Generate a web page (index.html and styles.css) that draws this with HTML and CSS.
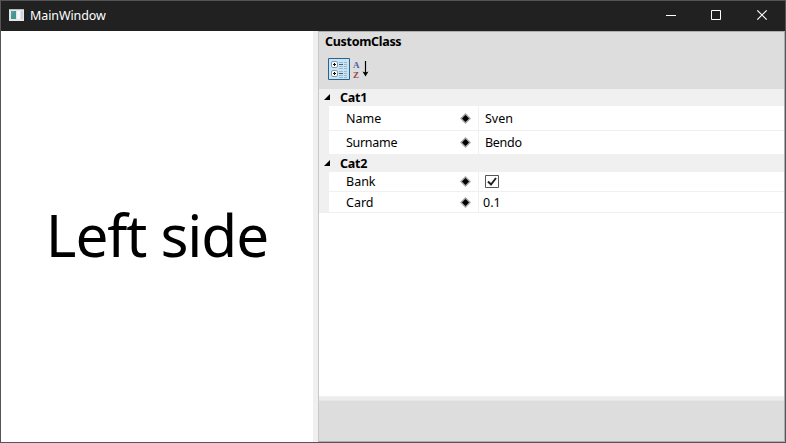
FILE: index.html
```html
<!DOCTYPE html>
<html lang="en">
<head>
<meta charset="utf-8">
<title>MainWindow</title>
<link rel="stylesheet" href="styles.css">
</head>
<body>
<svg class="defs" width="0" height="0" aria-hidden="true">
  <symbol id="diamond" viewBox="0 0 11 11"><path d="M5.500 0 11 5.500 5.500 11 0 5.500z" fill="#a2a2a2"/><path d="M5.500 2 9 5.500 5.500 9 2 5.500z" fill="#000"/><path d="M4 4h3v3H4z" fill="#000"/></symbol>
  <symbol id="expander" viewBox="0 0 6 6"><path d="M6 0v6H0z" fill="#000"/></symbol>
</svg>
<div class="window">
  <header class="titlebar">
    <svg class="app-icon" width="15" height="12" viewBox="0 0 15 12">
      <path d="M0 0h15v12H0z" fill="#e4e6e8"/><path d="M0 0h15v1H0z" fill="#b9bcbf"/>
      <path d="M2 2h5v8H2z" fill="#45998b"/><path d="M2 2h4L2 7z" fill="#5e98ae"/><path d="M8 2h3v8H8z" fill="#f8f8fa"/><path d="M12 2h2v8h-2z" fill="#cdd3e2"/>
    </svg>
    <span class="caption">MainWindow</span>
    <svg class="ctl" width="45" height="30" viewBox="0 0 45 30"><path d="M17 14.500h10" stroke="#fff"/></svg>
    <svg class="ctl" width="46" height="30" viewBox="0 0 46 30"><path d="M17.500 9.500h9v9h-9z" stroke="#fff" fill="none"/></svg>
    <svg class="ctl" width="45" height="30" viewBox="0 0 45 30"><path d="m17.300 9.300 9.400 9.400m0-9.400-9.400 9.400" stroke="#fff" stroke-width="1.200"/></svg>
  </header>
  <main class="content">
    <section class="left"><span>Left side</span></section>
    <div class="splitter"></div>
    <section class="grid">
      <div class="head">
        <div class="type">CustomClass</div>
        <div class="tools">
          <svg width="22" height="22" viewBox="0 0 22 22">
            <path d="M.5.5h21v21H.5z" fill="#c5e5f7" stroke="#2c628b"/>
            <g fill="#fff" stroke="#8799aa"><rect x="3.500" y="3.500" width="6" height="6" rx="1.500"/><rect x="3.500" y="12.500" width="6" height="6" rx="1.500"/></g>
            <path d="M5 6.500h3M6.500 5v3M5 15.500h3M6.500 14v3" stroke="#111"/>
            <path d="M11 6.500h4M11 15.500h4" stroke="#4c5c68"/>
            <path d="M11 4.500h4M11 8.500h4M11 10.500h4M11 13.500h4M11 17.500h4M11 19.500h4M16 4.500h3M16 6.500h3M16 8.500h3M16 10.500h3M16 13.500h3M16 15.500h3M16 17.500h3M16 19.500h3" stroke="#8ba5b6" stroke-width=".7"/>
          </svg>
          <div class="az"><span class="a">A</span><span class="z">Z</span></div>
          <svg class="arrow" width="7" height="16" viewBox="0 0 7 16"><path d="M3.500 0v13" stroke="#000" stroke-width="1.200"/><path d="M.5 10.500 3.500 11.500l3-1-3 5z" fill="#000"/></svg>
        </div>
      </div>
      <div class="body">
        <div class="cat c1"><svg width="6" height="6"><use href="#expander"/></svg><span>Cat1</span></div>
        <div class="row r1"><span class="label">Name</span><svg width="11" height="11"><use href="#diamond"/></svg><span class="value">Sven</span></div>
        <div class="row r2"><span class="label tight">Surname</span><svg width="11" height="11"><use href="#diamond"/></svg><span class="value tight">Bendo</span></div>
        <div class="cat c2"><svg width="6" height="6"><use href="#expander"/></svg><span>Cat2</span></div>
        <div class="row r3"><span class="label">Bank</span><svg width="11" height="11"><use href="#diamond"/></svg><span class="value"><svg width="14" height="13" viewBox="0 0 14 13"><path d="M.5.5h13v12H.5z" fill="#fff" stroke="#555"/><path d="m3 6.500 3 3L11 3" fill="none" stroke="#222" stroke-width="2"/></svg></span></div>
        <div class="row r4"><span class="label">Card</span><svg width="11" height="11"><use href="#diamond"/></svg><span class="value num">0.1</span></div>
      </div>
      <div class="hsplit"></div>
      <div class="description"></div>
    </section>
  </main>
</div>
</body>
</html>
```
FILE: styles.css
```css
* { box-sizing: border-box; }
body { margin: 0; font: 12.5px/17px "Noto Sans", "Open Sans", sans-serif; color: #000; }
svg { display: block; flex: none; }
.defs { position: absolute; }
.window { width: 786px; height: 443px; border: 1px solid #555557; background: #fff; display: flex; flex-direction: column; overflow: hidden; }
.titlebar { height: 30px; flex: none; background: #212121; display: flex; align-items: center; color: #fff; padding-left: 8px; }
.app-icon { margin-bottom: 2px; }
.caption { margin: -1px 0 0 6px; flex: 1; letter-spacing: -.1px; }
.content { flex: 1; min-height: 0; display: flex; }
.left { width: 312px; display: flex; align-items: center; justify-content: center; font-size: 58.5px; line-height: 80px; white-space: nowrap; padding-bottom: 6px; }
.left span { letter-spacing: -1.1px; }
.splitter { width: 5px; background: #f0f0f0; }
.grid { flex: 1; border: 1px solid #abadb3; border-left-color: #c8c8c8; display: flex; flex-direction: column; min-width: 0; }
.head { height: 57px; flex: none; background: #ddd; padding: 1px 0 0 6px; }
.type { font-weight: 700; letter-spacing: -.3px; }
.tools { display: flex; padding: 8px 0 0 3px; height: 32px; }
.az { width: 10px; margin: 2px 0 0 3px; font: 700 9px/10px "Liberation Serif", serif; display: flex; flex-direction: column; }
.a { color: #4762a7; }
.z { color: #94444b; }
.arrow { margin: 3px 0 0 -1px; }
.body { flex: 1; }
.cat { height: 17px; background: #f0f0f0; display: flex; align-items: center; padding-left: 5px; font-weight: 700; letter-spacing: -.2px; }
.cat svg { margin-top: -1px; }
.cat span { margin-left: 10px; }
.row { height: 24px; border-left: 10px solid #f0f0f0; border-bottom: 1px solid #f0f0f0; display: grid; grid-template-columns: 131px 18px 1fr; align-items: center; }
.label { padding-left: 17px; }
.tight { letter-spacing: -.3px; }
.value { align-self: stretch; display: flex; align-items: center; padding-left: 6px; border-left: 1px solid #f0f0f0; }
.num { padding-left: 4px; }
.r1 { height: 25px; }
.r3 { height: 20px; }
.r4 { height: 21px; }
.hsplit { height: 5px; background: #ededed; border-top: 1px solid #f0f0f0; border-bottom: 1px solid #e6e6e6; }
.description { height: 40px; background: #ddd; }
```
